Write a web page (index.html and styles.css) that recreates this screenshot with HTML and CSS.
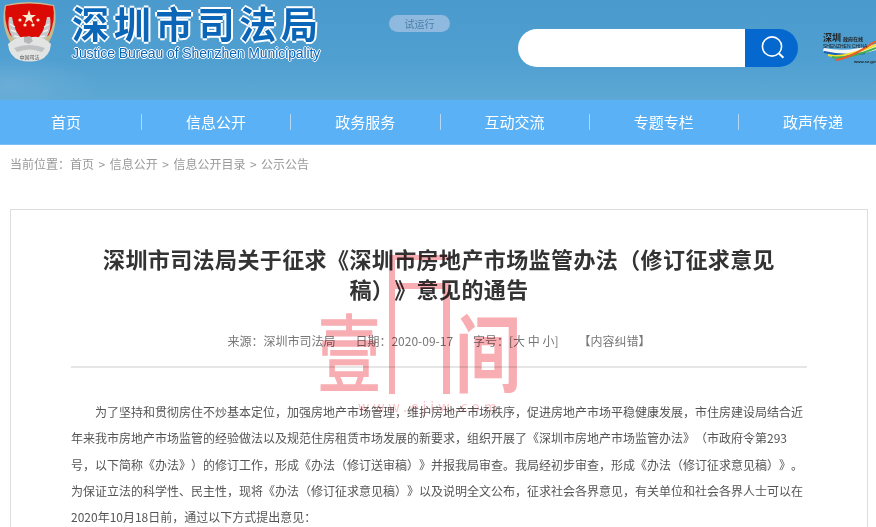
FILE: index.html
```html
<!DOCTYPE html>
<html lang="zh-CN">
<head>
    <meta charset="UTF-8">
    <title>深圳市司法局</title>
    <link rel="stylesheet" href="styles.css">
</head>
<body>
    <header class="banner">
        <svg class="emblem" width="60" height="64" viewBox="0 0 60 64">
            <path d="M5 5 Q29 -1 54 5 Q58 20 52 36 L44 52 L15 52 L7 36 Q1 20 5 5Z" fill="#c9b98f"/>
            <path d="M6 6 Q29 1 53 6 Q56 20 49 35 Q42 41 29 41 Q16 41 10 35 Q3 20 6 6Z" fill="#dc0a04"/>
            <path d="M29 10l1.700 5h5.300l-4.300 3.100 1.600 5.100-4.300-3.100-4.300 3.100 1.600-5.100-4.300-3.100h5.300z" fill="#f7ead0"/>
            <circle cx="20" cy="20" r="1.600" fill="#f7ead0"/>
            <circle cx="38" cy="20" r="1.600" fill="#f7ead0"/>
            <circle cx="25" cy="25" r="1.600" fill="#f7ead0"/>
            <circle cx="33" cy="25" r="1.600" fill="#f7ead0"/>
            <path d="M9 17 Q6 34 19 44 L24 41 Q14 32 12 17Z" fill="#c5c9c9"/>
            <path d="M50 17 Q53 34 40 44 L35 41 Q45 32 47 17Z" fill="#c5c9c9"/>
            <path d="M10 24l5 3M11 30l5 2M14 36l5 1M49 24l-5 3M48 30l-5 2M45 36l-5 1" stroke="#eef0f0" stroke-width="1.400"/>
            <path d="M8 44 Q20 34 29 38 Q40 34 51 44 Q50 56 40 60 Q29 63 19 60 Q9 56 8 44Z" fill="#e2e4e3"/>
            <path d="M24 37l6-1 3 5-4 3-5-2z" fill="#b4b8b8"/>
            <path d="M14 48 Q29 42 45 48 L42 52 Q29 47 17 52Z" fill="#bfc2c2"/>
            <text class="emblem-text" x="29.500" y="59" text-anchor="middle">中国司法</text>
        </svg>
        <div class="brand">
            <div class="brand-cn">深圳市司法局</div>
            <div class="brand-en">Justice Bureau of Shenzhen Municipality</div>
        </div>
        <span class="trial">试运行</span>
        <div class="search">
            <div class="search-input"></div>
            <button class="search-btn" type="button">
                <svg width="24" height="24" viewBox="0 0 24 24" fill="none" stroke="#fff" stroke-width="1.600">
                    <circle cx="11" cy="10.500" r="9.600"/>
                    <path d="M18 17.500l4.400 4.200" stroke-width="2"/>
                </svg>
            </button>
        </div>
        <div class="portal">
            <svg class="portal-wave" width="53" height="26" viewBox="0 0 53 26" fill="none" stroke-width="2">
                <path d="M0 10 Q24 18 53 9 L53 3 Q24 12 1 7Z" fill="#f4f6f6" stroke="none"/>
                <path d="M1 11 Q22 16 42 12" stroke="#1660b8"/>
                <path d="M5 14 Q20 18 53 4" stroke="#f6df2c"/>
                <path d="M9 16 Q24 19 53 7" stroke="#45ad4c"/>
                <path d="M12 19 Q26 18 53 0" stroke="#ec5a2c"/>
            </svg>
            <div class="portal-cn">深圳 <small>政府在线</small></div>
            <div class="portal-en">SHENZHEN CHINA</div>
            <div class="portal-url">www.sz.gov</div>
        </div>
    </header>

    <nav class="nav">
        <a class="nav-item">首页</a>
        <a class="nav-item">信息公开</a>
        <a class="nav-item">政务服务</a>
        <a class="nav-item">互动交流</a>
        <a class="nav-item">专题专栏</a>
        <a class="nav-item">政声传递</a>
    </nav>

    <div class="crumbs">
        <span>当前位置：首页</span>
        <span>&gt;</span>
        <span>信息公开</span>
        <span>&gt;</span>
        <span>信息公开目录</span>
        <span>&gt;</span>
        <span>公示公告</span>
    </div>

    <main class="article">
        <h1>深圳市司法局关于征求《深圳市房地产市场监管办法（修订征求意见稿）》意见的通告</h1>
        <div class="meta">
            <span>来源：深圳市司法局</span>
            <span>日期：2020-09-17</span>
            <span>字号：[大 中 小]</span>
            <span>【内容纠错】</span>
        </div>
        <p class="body-text">
            <span class="indent">为了坚持和贯彻房住不炒基本定位，加强房地产市场管理，维护房地产市场秩序，促进房地产市场平稳健康发展，市住房建设局结合近</span><br>
            年来我市房地产市场监管的经验做法以及规范住房租赁市场发展的新要求，组织开展了《深圳市房地产市场监管办法》（市政府令第293<br>
            号，以下简称《办法》）的修订工作，形成《办法（修订送审稿）》并报我局审查。我局经初步审查，形成《办法（修订征求意见稿）》。<br>
            为保证立法的科学性、民主性，现将《办法（修订征求意见稿）》以及说明全文公布，征求社会各界意见，有关单位和社会各界人士可以在<br>
            2020年10月18日前，通过以下方式提出意见：
        </p>
    </main>

    <!-- watermark over the article -->
    <div class="stamp">
        <span class="stamp-one">壹</span>
        <div class="stamp-door"><div class="stamp-door-inner"></div></div>
        <span class="stamp-two">间</span>
        <span class="stamp-url">www.ejiw.com</span>
    </div>
</body>
</html>
```

FILE: styles.css
```css
* {
    margin: 0;
    padding: 0;
    box-sizing: border-box;
}

body {
    font-family: "Noto Sans CJK SC", "Liberation Sans", sans-serif;
    text-spacing-trim: space-all;
    background: #fff;
    color: #333;
    height: 527px;
    overflow: hidden;
    position: relative;
}

.banner {
    height: 100px;
    background:
        radial-gradient(ellipse 90px 30px at 10px 85px, rgba(150, 195, 225, 0.3), rgba(150, 195, 225, 0)),
        linear-gradient(180deg, #4b9acd 0%, #4f9fd1 60%, #5da8d4 100%);
    display: flex;
    align-items: flex-start;
    overflow: hidden;
}

.emblem {
    flex: none;
}

.emblem-text {
    font-size: 5px;
    fill: #555;
}

.brand {
    flex: none;
    width: 256px;
    margin: 2px 0 0 12px;
    color: #0b66b8;
}

.brand-cn {
    font-size: 37px;
    line-height: 42px;
    font-weight: 700;
    letter-spacing: 4.800px;
    white-space: nowrap;
    text-shadow: 2px 0 0 #fff, -2px 0 0 #fff, 0 2px 0 #fff, 0 -2px 0 #fff;
}

.brand-en {
    font-family: "Liberation Sans", sans-serif;
    font-size: 14px;
    line-height: 17px;
    letter-spacing: -0.1px;
    white-space: nowrap;
    margin-top: 1px;
    text-shadow: 1px 0 0 #fff, -1px 0 0 #fff, 0 1px 0 #fff, 0 -1px 0 #fff;
}

.trial {
    flex: none;
    width: 61px;
    height: 17px;
    margin: 15px 0 0 61px;
    border-radius: 9px;
    background: #8fb9de;
    color: #4d7fa8;
    font-size: 10px;
    line-height: 17px;
    text-align: center;
}

.search {
    flex: none;
    display: flex;
    width: 280px;
    height: 38px;
    margin: 29px 0 0 68px;
}

.search-input {
    flex: 1;
    background: #fff;
    border-radius: 19px 0 0 19px;
}

.search-btn {
    width: 53px;
    border: none;
    background: #0468cf;
    border-radius: 0 19px 19px 0;
    display: flex;
    align-items: center;
    justify-content: center;
    padding-left: 2px;
}

.portal {
    flex: none;
    width: 53px;
    height: 40px;
    margin: 33px 0 0 25px;
    position: relative;
    color: #222;
    white-space: nowrap;
}

.portal-cn {
    position: relative;
    font-size: 9px;
    line-height: 9px;
    font-weight: 700;
}

.portal-cn small {
    font-size: 5px;
}

.portal-en {
    position: relative;
    font-family: "Liberation Sans", sans-serif;
    font-size: 5px;
    line-height: 6px;
}

.portal-wave {
    position: absolute;
    left: 0;
    top: 8px;
}

.portal-url {
    position: absolute;
    top: 26px;
    left: 31px;
    font-family: "Liberation Sans", sans-serif;
    font-size: 4.200px;
    font-weight: 700;
}

.nav {
    height: 45px;
    background: #5ab1f6;
    border-bottom: 1px solid #7cc0f5;
    display: flex;
    align-items: center;
}

.nav-item {
    flex: none;
    width: 149.250px;
    color: #fff;
    font-size: 15px;
    line-height: 16px;
    text-align: center;
    border-left: 1px solid #b4d8f5;
}

.nav-item:first-child {
    width: 141px;
    border-left: none;
    padding-right: 9px;
}

.crumbs {
    height: 64px;
    padding: 11px 0 0 10px;
    display: flex;
    gap: 4.500px;
    font-size: 12px;
    line-height: 16px;
    color: #999;
}

.article {
    margin: 0 8px 0 10px;
    padding: 33px 60px 0;
    height: 400px;
    background: #fff;
    border: 1px solid #ddd;
}

h1 {
    font-size: 22px;
    line-height: 30px;
    font-weight: 700;
    letter-spacing: 0.4px;
    color: #333;
    text-align: center;
    padding: 0 28px;
}

.meta {
    margin-top: 29px;
    padding-bottom: 16px;
    border-bottom: 2px solid #e6e6e6;
    display: flex;
    justify-content: center;
    gap: 20px;
    font-size: 12px;
    line-height: 18px;
    color: #777;
    white-space: nowrap;
}

.body-text {
    margin-top: 31px;
    font-size: 12px;
    line-height: 26.250px;
    color: #555;
    white-space: nowrap;
}

.indent {
    margin-left: 2em;
}

.stamp {
    position: absolute;
    left: 320px;
    top: 255px;
    width: 204px;
    height: 160px;
    color: #f8adb3;
    mix-blend-mode: multiply;
    pointer-events: none;
}

.stamp-one,
.stamp-two {
    position: absolute;
    top: 60px;
    font-size: 66px;
    line-height: 66px;
}

.stamp-one {
    left: -4px;
    font-weight: 400;
    -webkit-text-stroke: 1px #f8adb3;
    transform: scale(0.95, 1.300);
}

.stamp-two {
    left: 135px;
    font-weight: 700;
    transform: scale(1, 1.300);
}

.stamp-door {
    position: absolute;
    left: 69px;
    top: 0;
    width: 61px;
    height: 139px;
    border-left: 6px solid #f8adb3;
    border-top: 5px solid #f8adb3;
}

.stamp-door-inner {
    height: 111px;
    margin-top: 23px;
    border-top: 6px solid #f8adb3;
    border-right: 7px solid #f8adb3;
}

.stamp-url {
    position: absolute;
    left: 38px;
    top: 143px;
    font-size: 14px;
    line-height: 16px;
    letter-spacing: 4px;
    white-space: nowrap;
    opacity: 0.7;
}
```
